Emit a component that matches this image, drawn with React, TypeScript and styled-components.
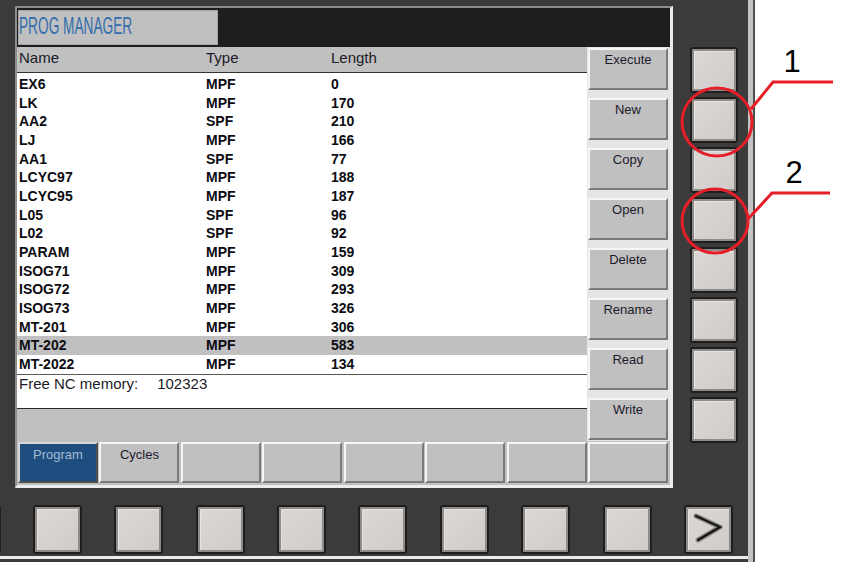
import React from 'react';
import styled, { createGlobalStyle } from 'styled-components';

const GlobalStyle = createGlobalStyle`
	html, body {
		margin: 0;
		padding: 0;
		background: #ffffff;
	}
	body {
		font-family: 'Liberation Sans', Arial, sans-serif;
	}
`;

interface IProgram {
	name: string;
	type: string;
	length: number;
}

const programs: IProgram[] = [
	{ name: 'EX6', type: 'MPF', length: 0 },
	{ name: 'LK', type: 'MPF', length: 170 },
	{ name: 'AA2', type: 'SPF', length: 210 },
	{ name: 'LJ', type: 'MPF', length: 166 },
	{ name: 'AA1', type: 'SPF', length: 77 },
	{ name: 'LCYC97', type: 'MPF', length: 188 },
	{ name: 'LCYC95', type: 'MPF', length: 187 },
	{ name: 'L05', type: 'SPF', length: 96 },
	{ name: 'L02', type: 'SPF', length: 92 },
	{ name: 'PARAM', type: 'MPF', length: 159 },
	{ name: 'ISOG71', type: 'MPF', length: 309 },
	{ name: 'ISOG72', type: 'MPF', length: 293 },
	{ name: 'ISOG73', type: 'MPF', length: 326 },
	{ name: 'MT-201', type: 'MPF', length: 306 },
	{ name: 'MT-202', type: 'MPF', length: 583 },
	{ name: 'MT-2022', type: 'MPF', length: 134 }
];

const verticalKeys = ['Execute', 'New', 'Copy', 'Open', 'Delete', 'Rename', 'Read', 'Write'];
const horizontalKeys = ['Program', 'Cycles', '', '', '', '', '', ''];

const Page = styled.div`
	position: relative;
	width: 848px;
	height: 562px;
	display: flex;
	overflow: hidden;
`;

const Panel = styled.div`
	width: 748px;
	height: 562px;
	background: #3b3b3b;
	display: flex;
	flex-direction: column;
	overflow: hidden;
`;

const EdgeStrip = styled.div`
	width: 9px;
	height: 562px;
	background: linear-gradient(to right, #c3c3c3 0 5px, #4f4f4f 5px 7px, #ffffff 7px);
`;

const TopArea = styled.div`
	display: flex;
	align-items: flex-start;
	padding: 6px 0 0 15px;
`;

const Screen = styled.div`
	box-sizing: border-box;
	width: 658px;
	height: 482px;
	border-style: solid;
	border-width: 2px 3px 3px 2px;
	border-color: #8e8e8e #ececec #ececec #8e8e8e;
	background: #c0c0c0;
	display: flex;
	flex-direction: column;
`;

const TitleRow = styled.div`
	box-sizing: border-box;
	height: 39px;
	padding: 2px 0 2px 1px;
	background: #1e1e1e;
	display: flex;
`;

const TitleBox = styled.div`
	box-sizing: border-box;
	width: 200px;
	background: #c0c0c0;
	border: 1px solid #a4a4a4;
	overflow: hidden;
`;

const TitleText = styled.span`
	display: inline-block;
	font-size: 24px;
	line-height: 30px;
	color: #336eae;
	white-space: nowrap;
	transform: scaleX(0.57);
	transform-origin: left center;
`;

const Main = styled.div`
	height: 394px;
	display: flex;
`;

const ListPane = styled.div`
	width: 570px;
	display: flex;
	flex-direction: column;
	background: #ffffff;
`;

const HeaderRow = styled.div`
	box-sizing: border-box;
	height: 26px;
	padding: 2px 0 0 2px;
	background: #c0c0c0;
	border-bottom: 1px solid #333333;
	display: grid;
	grid-template-columns: 187px 125px 1fr;
	font-size: 15px;
	line-height: 18px;
	color: #1c1a28;
`;

const ListBody = styled.div`
	padding-top: 2px;
`;

const Row = styled.div<{ $selected?: boolean }>`
	height: 18.667px;
	padding-left: 2px;
	display: grid;
	grid-template-columns: 187px 125px 1fr;
	font-size: 14px;
	font-weight: bold;
	line-height: 18.667px;
	color: #0c0c12;
	background: ${(p) => (p.$selected ? '#c0c0c0' : 'transparent')};
`;

const Footer = styled.div`
	box-sizing: border-box;
	height: 35px;
	padding-left: 2px;
	border-top: 1px solid #5a5a5a;
	border-bottom: 1px solid #2a2a2a;
	font-size: 15px;
	line-height: 18px;
	color: #1c1a28;
`;

const FooterLabel = styled.span`
	margin-right: 19px;
`;

const Filler = styled.div`
	flex: 1;
	background: #c0c0c0;
`;

const SideColumn = styled.div`
	box-sizing: border-box;
	width: 83px;
	padding: 1px 0 0 1px;
	background: #e6e6e6;
	display: flex;
	flex-direction: column;
	gap: 8px;
`;

const SoftKey = styled.div<{ $active?: boolean }>`
	box-sizing: border-box;
	border-style: solid;
	border-width: 2px;
	border-color: ${(p) => (p.$active ? '#d6d6d6 #4f4f4f #4f4f4f #d6d6d6' : '#f6f6f6 #7a7a7a #7a7a7a #f6f6f6')};
	background: ${(p) => (p.$active ? '#1d4e7f' : '#c0c0c0')};
	color: ${(p) => (p.$active ? '#a7bcd4' : '#1c1a2c')};
	font-size: 13px;
	line-height: 16px;
	padding-top: 2px;
	text-align: center;
`;

const SideSoftKey = styled(SoftKey)`
	width: 80px;
	height: 42px;
`;

const SoftRow = styled.div`
	box-sizing: border-box;
	height: 44px;
	padding: 1px 2px 2px 1px;
	display: flex;
	gap: 1.5px;
	background: #c0c0c0;
`;

const RowSoftKey = styled(SoftKey)`
	flex: 1;
	height: 41px;
	padding-top: 3px;
`;

const SideKeys = styled.div`
	margin-left: 17px;
	padding-top: 41px;
	display: flex;
	flex-direction: column;
	gap: 4px;
`;

const HardKey = styled.div<{ $w: number; $h: number }>`
	box-sizing: border-box;
	flex-shrink: 0;
	width: ${(p) => p.$w}px;
	height: ${(p) => p.$h}px;
	border: 2px solid #1e1e1e;
	border-radius: 3px;
	background: linear-gradient(135deg, #dbd8d5, #cfcbc8);
	box-shadow: inset 0 0 0 2px #8e8b88, inset 3px 3px 0 #e6e3e0;
	display: flex;
	align-items: center;
	justify-content: center;
`;

const BottomKeys = styled.div`
	display: flex;
	gap: 32.4px;
	margin: 17px 0 0 -48.5px;
`;

const BottomLine = styled.div`
	height: 3px;
	margin-top: 2px;
	background: #ececec;
`;

const Annotations = styled.svg`
	position: absolute;
	left: 0;
	top: 0;
	pointer-events: none;
`;

const Callout = styled.text`
	font-family: 'Liberation Sans', Arial, sans-serif;
	font-size: 31px;
	fill: #000000;
`;

const Chevron = () => (
	<svg width="45" height="45" viewBox="0 0 45 45">
		<polyline points="10,9 34,20 12,33" fill="none" stroke="#8a8886" strokeWidth="5" strokeLinejoin="round" strokeLinecap="round" />
		<polyline points="10,9 34,20 12,33" fill="none" stroke="#141414" strokeWidth="2.2" strokeLinejoin="miter" strokeLinecap="round" />
	</svg>
);

const App = () => {
	return (
		<Page>
			<GlobalStyle />
			<Panel>
				<TopArea>
					<Screen>
						<TitleRow>
							<TitleBox>
								<TitleText>PROG MANAGER</TitleText>
							</TitleBox>
						</TitleRow>
						<Main>
							<ListPane>
								<HeaderRow>
									<span>Name</span>
									<span>Type</span>
									<span>Length</span>
								</HeaderRow>
								<ListBody>
									{programs.map((p) => (
										<Row key={p.name} $selected={p.name === 'MT-202'}>
											<span>{p.name}</span>
											<span>{p.type}</span>
											<span>{p.length}</span>
										</Row>
									))}
								</ListBody>
								<Footer>
									<FooterLabel>Free NC memory:</FooterLabel>
									<span>102323</span>
								</Footer>
								<Filler />
							</ListPane>
							<SideColumn>
								{verticalKeys.map((k) => (
									<SideSoftKey key={k}>{k}</SideSoftKey>
								))}
							</SideColumn>
						</Main>
						<SoftRow>
							{horizontalKeys.map((k, i) => (
								<RowSoftKey key={i} $active={i === 0}>{k}</RowSoftKey>
							))}
						</SoftRow>
					</Screen>
					<SideKeys>
						{Array.from({ length: 8 }).map((_, i) => (
							<HardKey key={i} $w={48} $h={46} />
						))}
					</SideKeys>
				</TopArea>
				<BottomKeys>
					{Array.from({ length: 10 }).map((_, i) => (
						<HardKey key={i} $w={49} $h={49}>
							{i === 9 && <Chevron />}
						</HardKey>
					))}
				</BottomKeys>
				<BottomLine />
			</Panel>
			<EdgeStrip />
			<Annotations width="848" height="562" viewBox="0 0 848 562">
				<ellipse cx="717" cy="122" rx="35" ry="34" fill="none" stroke="#e61e28" strokeWidth="3" />
				<polyline points="833,82 773,82 751,109" fill="none" stroke="#e61e28" strokeWidth="3" />
				<Callout x="792" y="72" textAnchor="middle">1</Callout>
				<ellipse cx="715" cy="221" rx="33" ry="32" fill="none" stroke="#e61e28" strokeWidth="3" />
				<polyline points="830,193 772,193 748,219" fill="none" stroke="#e61e28" strokeWidth="3" />
				<Callout x="794" y="183" textAnchor="middle">2</Callout>
			</Annotations>
		</Page>
	);
};

export default App;
